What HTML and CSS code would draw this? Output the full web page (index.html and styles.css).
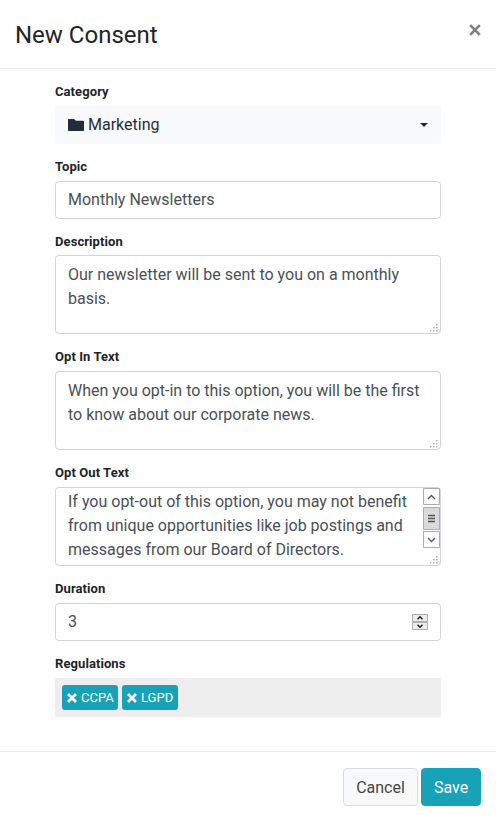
FILE: index.html
```html
<!DOCTYPE html>
<html lang="en">
<head>
<meta charset="utf-8">
<title>New Consent</title>
<link rel="stylesheet" href="styles.css">
</head>
<body>
<div class="modal">
  <header class="modal-header">
    <h1>New Consent</h1>
    <svg class="close" width="12" height="12" viewBox="0 0 12 12"><path d="M1.200 1.200 10.800 10.800M10.800 1.200 1.200 10.800"/></svg>
  </header>
  <main class="modal-body">
    <div class="field">
      <div class="label">Category</div>
      <div class="select">
        <svg class="folder" width="16" height="12" viewBox="0 0 16 12"><path d="M.8 0H6l2 1.700h7.200a.8.8 0 0 1 .8.8v8.700a.8.8 0 0 1-.8.8H.8a.8.8 0 0 1-.8-.8V.8A.8.8 0 0 1 .8 0z"/></svg>
        <span>Marketing</span>
        <i class="caret"></i>
      </div>
    </div>
    <div class="field topic">
      <div class="label">Topic</div>
      <div class="input">Monthly Newsletters</div>
    </div>
    <div class="field description">
      <div class="label">Description</div>
      <div class="textarea">Our newsletter will be sent to you on a monthly<br>basis.
        <svg class="grip" width="9" height="9" viewBox="0 0 9 9"><path d="M6 0h1.500v1.500H6zM3 3h1.500v1.500H3zM6 3h1.500v1.500H6zM0 6h1.500v1.500H0zM3 6h1.500v1.500H3zM6 6h1.500v1.500H6z"/></svg>
      </div>
    </div>
    <div class="field">
      <div class="label">Opt In Text</div>
      <div class="textarea">When you opt-in to this option, you will be the first<br>to know about our corporate news.
        <svg class="grip" width="9" height="9" viewBox="0 0 9 9"><path d="M6 0h1.500v1.500H6zM3 3h1.500v1.500H3zM6 3h1.500v1.500H6zM0 6h1.500v1.500H0zM3 6h1.500v1.500H3zM6 6h1.500v1.500H6z"/></svg>
      </div>
    </div>
    <div class="field">
      <div class="label">Opt Out Text</div>
      <div class="textarea scrolled">If you opt-out of this option, you may not benefit<br>from unique opportunities like job postings and<br>messages from our Board of Directors.
        <svg class="scrollbar" width="17" height="60" viewBox="0 0 17 60">
          <path class="key" d="M.5.500h16v16H.5zM.5 43.500h16v16H.5z"/>
          <path class="thumb" d="M.5 19.500h16v22H.5z"/>
          <path class="chevron" d="m5 11 3.500-3.500L12 11M5 50l3.500 3.500L12 50"/>
          <path class="bars" d="M5 27.500h7M5 30.500h7M5 33.500h7"/>
        </svg>
        <svg class="grip" width="9" height="9" viewBox="0 0 9 9"><path d="M6 0h1.500v1.500H6zM3 3h1.500v1.500H3zM6 3h1.500v1.500H6zM0 6h1.500v1.500H0zM3 6h1.500v1.500H3zM6 6h1.500v1.500H6z"/></svg>
      </div>
    </div>
    <div class="field">
      <div class="label">Duration</div>
      <div class="input number">3
        <svg width="16" height="16" viewBox="0 0 16 16">
          <path class="step" d="M.5.500h15v7H.5zM.5 8.500h15v7H.5z"/>
          <path class="arrows" d="m5.500 5.200 2.500-2.500 2.500 2.500M5.500 10.800 8 13.300l2.500-2.500"/>
        </svg>
      </div>
    </div>
    <div class="field">
      <div class="label">Regulations</div>
      <div class="tags">
        <span class="tag"><svg width="10" height="10" viewBox="0 0 10 10"><path d="M1 1 9 9M9 1 1 9"/></svg>CCPA</span>
        <span class="tag"><svg width="10" height="10" viewBox="0 0 10 10"><path d="M1 1 9 9M9 1 1 9"/></svg>LGPD</span>
      </div>
    </div>
  </main>
  <footer class="modal-footer">
    <button class="btn cancel">Cancel</button>
    <button class="btn save">Save</button>
  </footer>
</div>
</body>
</html>
```
FILE: styles.css
```css
* { box-sizing: border-box; }
body {
  margin: 0;
  background: #fff;
  color: #212529;
  font: 16px/24px Roboto, "Liberation Sans", sans-serif;
}
.modal { display: flex; flex-direction: column; height: 820px; }
.modal-header {
  display: flex;
  justify-content: space-between;
  height: 69px;
  padding: 16px 15px;
  border-bottom: 1px solid #e9ecef;
}
h1 { margin: 0; font-size: 24px; font-weight: 400; line-height: 39px; }
.close { margin-top: 8px; fill: none; stroke: #7f7f7f; stroke-width: 2.6; }
.modal-body { height: 682px; padding: 15px 55px 0; }
.field { margin-bottom: 15px; }
.topic { margin-bottom: 15px; }
.label {
  height: 22px;
  font-size: 13px;
  font-weight: 700;
  line-height: 15px;
  letter-spacing: .08px;
}
.description .label { height: 21px; }
.input, .textarea {
  position: relative;
  height: 38px;
  padding: 6px 12px;
  border: 1px solid #ced4da;
  border-radius: 4px;
  color: #495057;
  white-space: nowrap;
}
.textarea { height: 79px; padding-top: 7px; }
.scrolled { padding-top: 2px; }
.select {
  display: flex;
  align-items: center;
  gap: 4px;
  height: 38px;
  padding: 0 13px;
  border-radius: 4px;
  background: #f8f9fa;
  color: #1f2d3d;
}
.folder { fill: #1f2d3d; }
.caret {
  margin-left: auto;
  border: 4px solid transparent;
  border-top-color: #1f2d3d;
  border-bottom: 0;
}
.grip { position: absolute; right: 1px; bottom: 0; fill: #b0b0b0; }
.scrollbar { position: absolute; top: 0; right: 0; fill: none; }
.key { fill: #fff; stroke: #adadad; }
.thumb { fill: #dadada; stroke: #adadad; }
.chevron { stroke: #555; stroke-width: 1.3; }
.bars { stroke: #555; stroke-width: 1.6; }
.number { display: flex; align-items: center; justify-content: space-between; }
.step { fill: #ececec; stroke: #adadad; }
.arrows { fill: none; stroke: #222; stroke-width: 1.5; }
.tags { display: flex; gap: 4px; height: 39px; padding: 7px; background: #eee; border-radius: 2px; }
.tag {
  display: flex;
  align-items: center;
  gap: 4px;
  width: 56px;
  height: 25px;
  padding-left: 5px;
  border-radius: 3px;
  background: #17a2b8;
  color: #fff;
  font-size: 13px;
}
.tag path { stroke: #fff; stroke-width: 2.7; }
.modal-footer {
  display: flex;
  justify-content: flex-end;
  gap: 3px;
  height: 69px;
  padding: 16px 15px;
  border-top: 1px solid #e9ecef;
}
.btn {
  height: 38px;
  padding: 2px 12px 0;
  border: 1px solid #17a2b8;
  border-radius: 4px;
  font: inherit;
}
.cancel { width: 75px; background: #f8f9fa; border-color: #d8dce1; color: #444; }
.save { width: 60px; background: #17a2b8; color: #fff; }
```
